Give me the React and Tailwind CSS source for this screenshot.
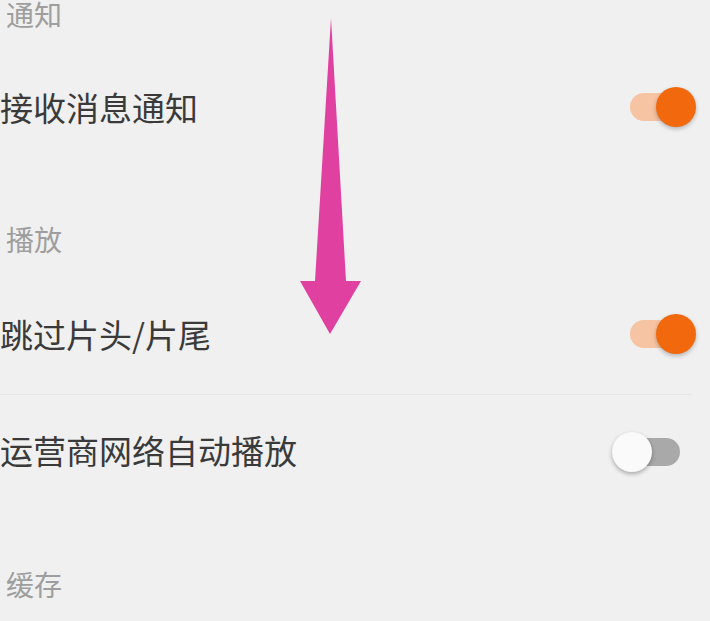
import React from 'react'

function Toggle({ on, className = '' }) {
  if (on) {
    return (
      <div className={`relative w-[84px] h-[40px] shrink-0 ${className}`}>
        <div className="absolute left-[18px] top-[6px] w-[58px] h-[28px] rounded-full bg-[#f6c3a3]" />
        <div className="absolute right-0 top-0 w-[40px] h-[40px] rounded-full bg-[#f2690d] shadow-[0_2px_4px_rgba(0,0,0,0.25)]" />
      </div>
    )
  }
  return (
    <div className={`relative w-[84px] h-[40px] shrink-0 ${className}`}>
      <div className="absolute left-[10px] top-[6px] w-[58px] h-[28px] rounded-full bg-[#a9a9a9]" />
      <div className="absolute left-0 top-0 w-[40px] h-[40px] rounded-full bg-[#fafafa] shadow-[0_2px_4px_rgba(0,0,0,0.3)]" />
    </div>
  )
}

function Header({ children, className }) {
  return (
    <div className={`pl-[6px] text-[28px] leading-[30px] text-[#9e9e9e] ${className}`}>
      {children}
    </div>
  )
}

function Row({ label, on, className, toggleClass }) {
  return (
    <div className={`flex items-center justify-between pr-[14px] ${className}`}>
      <span className="text-[33px] leading-[40px] text-[#3a3a3a]">{label}</span>
      <Toggle on={on} className={toggleClass} />
    </div>
  )
}

export default function App() {
  return (
    <div
      className="relative w-[710px] h-[621px] overflow-hidden bg-[#f0f0f0]"
      style={{ fontFamily: "'Noto Sans CJK SC', 'Noto Sans', sans-serif" }}
    >
      {/* 通知 */}
      <Header className="h-[69px] -mt-[2px] pt-[1px]">通知</Header>
      <Row label="接收消息通知" on className="h-[80px]" />

      {/* 播放 */}
      <Header className="h-[130px] pt-[77px]">播放</Header>
      <Row label="跳过片头/片尾" on className="h-[117px] pb-[4px]" toggleClass="mt-[1px]" />
      <div className="mr-[18px] h-px bg-[#e6e6e6]" />
      <Row label="运营商网络自动播放" on={false} className="h-[110px]" toggleClass="mt-[4px]" />

      {/* 缓存 */}
      <Header className="pt-[64px]">缓存</Header>

      {/* annotation arrow */}
      <svg
        className="absolute left-[298px] top-0 w-[66px] h-[340px] pointer-events-none"
        viewBox="298 0 66 340"
      >
        <polygon
          points="331,18 346,281 361,281 330,334 300,281 315,281"
          fill="#e0409f"
        />
      </svg>
    </div>
  )
}
